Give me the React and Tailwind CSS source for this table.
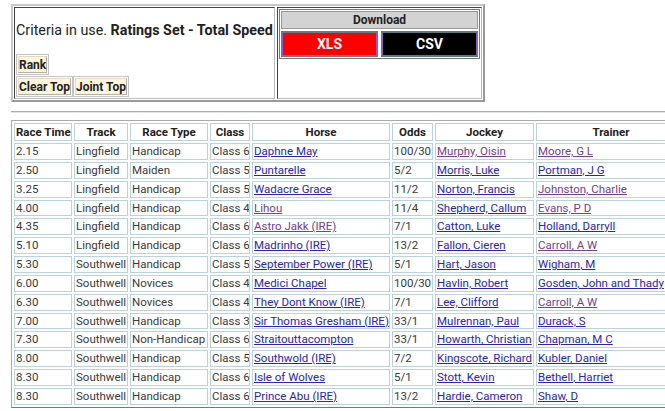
import React from 'react';

const BLUE = 'text-[#2727ad]';
const PURPLE = 'text-[#74418f]';

// v = visited link flags: [horse, jockey, trainer]
const races = [
  { time: '2.15', track: 'Lingfield', type: 'Handicap', cls: 'Class 6', horse: 'Daphne May', odds: '100/30', jockey: 'Murphy, Oisin', trainer: 'Moore, G L', v: [0, 1, 1] },
  { time: '2.50', track: 'Lingfield', type: 'Maiden', cls: 'Class 5', horse: 'Puntarelle', odds: '5/2', jockey: 'Morris, Luke', trainer: 'Portman, J G', v: [0, 0, 0] },
  { time: '3.25', track: 'Lingfield', type: 'Handicap', cls: 'Class 5', horse: 'Wadacre Grace', odds: '11/2', jockey: 'Norton, Francis', trainer: 'Johnston, Charlie', v: [0, 0, 1] },
  { time: '4.00', track: 'Lingfield', type: 'Handicap', cls: 'Class 4', horse: 'Lihou', odds: '11/4', jockey: 'Shepherd, Callum', trainer: 'Evans, P D', v: [1, 0, 1] },
  { time: '4.35', track: 'Lingfield', type: 'Handicap', cls: 'Class 6', horse: 'Astro Jakk (IRE)', odds: '7/1', jockey: 'Catton, Luke', trainer: 'Holland, Darryll', v: [1, 0, 0] },
  { time: '5.10', track: 'Lingfield', type: 'Handicap', cls: 'Class 6', horse: 'Madrinho (IRE)', odds: '13/2', jockey: 'Fallon, Cieren', trainer: 'Carroll, A W', v: [0, 0, 1] },
  { time: '5.30', track: 'Southwell', type: 'Handicap', cls: 'Class 5', horse: 'September Power (IRE)', odds: '5/1', jockey: 'Hart, Jason', trainer: 'Wigham, M', v: [0, 0, 0] },
  { time: '6.00', track: 'Southwell', type: 'Novices', cls: 'Class 4', horse: 'Medici Chapel', odds: '100/30', jockey: 'Havlin, Robert', trainer: 'Gosden, John and Thady', v: [0, 0, 0] },
  { time: '6.30', track: 'Southwell', type: 'Novices', cls: 'Class 4', horse: 'They Dont Know (IRE)', odds: '7/1', jockey: 'Lee, Clifford', trainer: 'Carroll, A W', v: [0, 0, 1] },
  { time: '7.00', track: 'Southwell', type: 'Handicap', cls: 'Class 3', horse: 'Sir Thomas Gresham (IRE)', odds: '33/1', jockey: 'Mulrennan, Paul', trainer: 'Durack, S', v: [0, 0, 0] },
  { time: '7.30', track: 'Southwell', type: 'Non-Handicap', cls: 'Class 6', horse: 'Straitouttacompton', odds: '33/1', jockey: 'Howarth, Christian', trainer: 'Chapman, M C', v: [0, 0, 0] },
  { time: '8.00', track: 'Southwell', type: 'Handicap', cls: 'Class 5', horse: 'Southwold (IRE)', odds: '7/2', jockey: 'Kingscote, Richard', trainer: 'Kubler, Daniel', v: [0, 0, 0] },
  { time: '8.30', track: 'Southwell', type: 'Handicap', cls: 'Class 6', horse: 'Isle of Wolves', odds: '5/1', jockey: 'Stott, Kevin', trainer: 'Bethell, Harriet', v: [0, 0, 0] },
  { time: '8.30', track: 'Southwell', type: 'Handicap', cls: 'Class 6', horse: 'Prince Abu (IRE)', odds: '13/2', jockey: 'Hardie, Cameron', trainer: 'Shaw, D', v: [0, 0, 0] },
];

const cols = [
  { label: 'Race Time', w: 'w-[58px]' },
  { label: 'Track', w: 'w-[54px]' },
  { label: 'Race Type', w: 'w-[78px]' },
  { label: 'Class', w: 'w-[40px]' },
  { label: 'Horse', w: 'w-[138px]' },
  { label: 'Odds', w: 'w-[41px]' },
  { label: 'Jockey', w: 'w-[99px]' },
  { label: 'Trainer', w: 'w-[150px]' },
];

const cell = 'border border-[#b9d3e0] px-px py-0 leading-[14.85px] whitespace-nowrap overflow-hidden';

const Link = ({ visited, children }) => (
  <a href="#" className={`underline ${visited ? PURPLE : BLUE}`}>{children}</a>
);

const TopButton = ({ children }) => (
  <div className="flex border border-[#c4c4c4] p-px">
    <button className="bg-[#fdf6dc] border border-[#e2dac2] border-b-[#b8b0a0] border-r-[#b8b0a0] px-0 h-[17px] text-[12px] font-bold text-[#222] leading-none">
      {children}
    </button>
  </div>
);

export default function App() {
  return (
    <div className="w-[665px] h-[411px] overflow-hidden bg-white font-['Roboto',sans-serif] text-[#3a3a3a]">
      <div className="pl-[11px] pt-[4px]">
        <div className="flex w-[474px] h-[98px] border-2 border-[#c8c8c8] border-b-[#9a9a9a] border-r-[#9a9a9a] p-px gap-[2px]">
          <div className="w-[261px] border border-[#444] border-b-[#bbb] border-r-[#bbb] flex flex-col pl-[1px] pt-[13px]">
            <div className="text-[14.3px] text-[#222] leading-[18px] whitespace-nowrap">
              Criteria in use. <span className="font-bold">Ratings Set - Total Speed</span>
            </div>
            <div className="mt-[15px] flex flex-col gap-[1px] w-fit">
              <div className="flex"><TopButton>Rank</TopButton></div>
              <div className="flex"><TopButton>Clear Top</TopButton><TopButton>Joint Top</TopButton></div>
            </div>
          </div>
          <div className="flex-1 border border-[#444] border-b-[#bbb] border-r-[#bbb] p-px">
            <div className="border border-[#777] p-px flex flex-col gap-[2px]">
              <div className="h-[18px] bg-[#d3d3d3] border border-[#999] flex items-center justify-center text-[12px] font-bold text-[#222]">Download</div>
              <div className="flex gap-[3px]">
                <button className="flex-1 h-[26px] bg-[#ff0000] border-2 border-[#777] border-x-[#8a5cc8] text-white font-bold text-[14px]">XLS</button>
                <button className="flex-1 h-[26px] bg-black border-2 border-[#5a7a80] border-x-[#8a5cc8] text-white font-bold text-[14px]">CSV</button>
              </div>
            </div>
          </div>
        </div>
      </div>
      <div className="ml-[11px] mt-[9px] h-[2px] border-t border-[#b0b0b0] border-b border-b-[#e6e6e6]" />
      <div className="pl-[11px] pt-[7px]">
        <table className="border border-[#aaa] border-b-[#777] border-separate border-spacing-[2px] text-[11.5px] table-fixed w-[678px]">
          <thead>
            <tr>
              {cols.map((c) => (
                <th key={c.label} className={`${cell} ${c.w} h-[18px] font-bold text-[#222] text-center`}>{c.label}</th>
              ))}
            </tr>
          </thead>
          <tbody>
            {races.map((r, i) => (
              <tr key={i}>
                <td className={cell}>{r.time}</td>
                <td className={cell}>{r.track}</td>
                <td className={cell}>{r.type}</td>
                <td className={cell}>{r.cls}</td>
                <td className={cell}><Link visited={r.v[0]}>{r.horse}</Link></td>
                <td className={cell}>{r.odds}</td>
                <td className={cell}><Link visited={r.v[1]}>{r.jockey}</Link></td>
                <td className={cell}><Link visited={r.v[2]}>{r.trainer}</Link></td>
              </tr>
            ))}
          </tbody>
        </table>
      </div>
    </div>
  );
}
